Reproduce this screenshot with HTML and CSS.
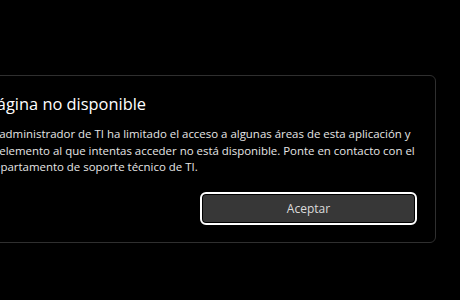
FILE: index.html
```html
<!DOCTYPE html>
<html lang="es">
<head>
<meta charset="utf-8">
<link rel="stylesheet" href="styles.css">
</head>
<body>
<div class="dialog">
  <div class="content">
    <h1 class="title">Página no disponible</h1>
    <p class="message">El administrador de TI ha limitado el acceso a algunas áreas de esta aplicación y<br>el elemento al que intentas acceder no está disponible. Ponte en contacto con el<br>departamento de soporte técnico de TI.</p>
  </div>
  <div class="footer">
    <span class="spacer"></span>
    <button class="btn">Aceptar</button>
  </div>
</div>
</body>
</html>
```
FILE: styles.css
```css
html, body {
  margin: 0;
  padding: 0;
  background: #000;
  overflow: hidden;
}
body {
  box-sizing: border-box;
  width: 460px;
  height: 300px;
  font-family: "Open Sans", "Noto Sans", sans-serif;
  color: #fff;
  padding-top: 75px;
}
.dialog {
  box-sizing: border-box;
  margin-left: -44px;
  width: 480px;
  height: 168px;
  border: 1px solid #2f2f2f;
  border-radius: 6px;
  background: #000;
  display: flex;
  flex-direction: column;
}
.content {
  padding: 17px 18px 0 30px;
}
.title {
  margin: 0;
  font-size: 16.4px;
  font-weight: 400;
  line-height: 22px;
  color: #fff;
  white-space: nowrap;
}
.message {
  margin: 11px 0 0;
  font-size: 11.45px;
  line-height: 16.5px;
  color: #e6e6e6;
  white-space: nowrap;
}
.footer {
  margin-top: auto;
  padding: 0 18px 17px;
  display: grid;
  grid-template-columns: 1fr 1fr;
  gap: 8px;
}
.btn {
  box-sizing: border-box;
  height: 33px;
  border: 2px solid #fff;
  border-radius: 6px;
  box-shadow: inset 0 0 0 1px #000;
  background: #373737;
  color: #dcdcdc;
  font-family: inherit;
  font-size: 12px;
  padding: 0;
}
```
